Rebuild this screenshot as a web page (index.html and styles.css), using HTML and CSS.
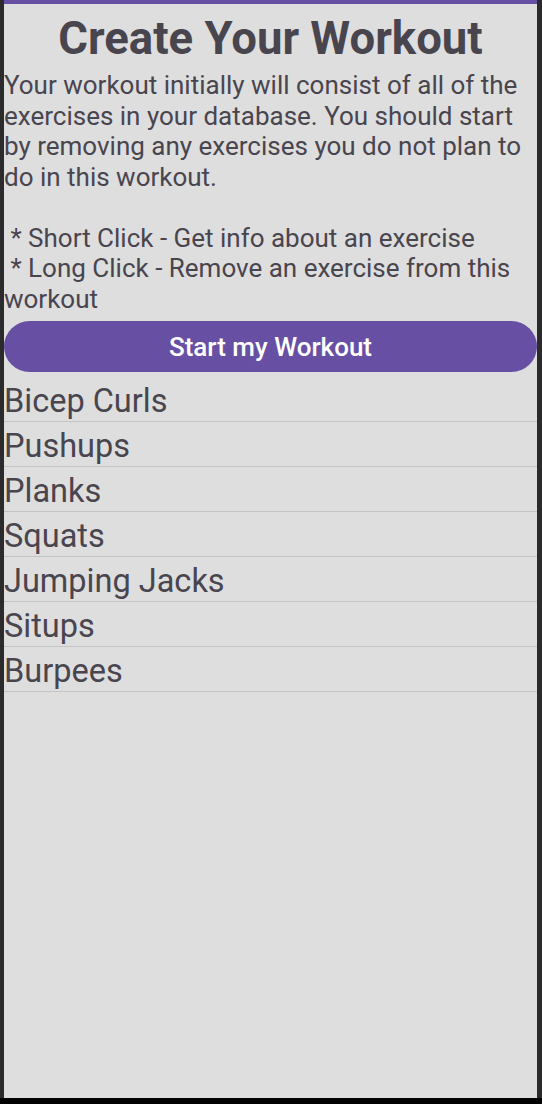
FILE: index.html
```html
<!DOCTYPE html>
<html>
<head>
<meta charset="utf-8">
<link rel="stylesheet" href="styles.css">
</head>
<body>
<div class="frame">
  <div class="screen">
    <h1 class="title">Create Your Workout</h1>
    <p class="intro">Your workout initially will consist of all of the exercises in your database. You should start by removing any exercises you do not plan to do in this workout.<br><br>&nbsp;* Short Click - Get info about an exercise<br>&nbsp;* Long Click - Remove an exercise from this workout</p>
    <button class="start">Start my Workout</button>
    <ul class="list">
      <li>Bicep Curls</li>
      <li>Pushups</li>
      <li>Planks</li>
      <li>Squats</li>
      <li>Jumping Jacks</li>
      <li>Situps</li>
      <li>Burpees</li>
    </ul>
  </div>
</div>
</body>
</html>
```
FILE: styles.css
```css
html, body {
  margin: 0;
  padding: 0;
  background: #000;
}
.frame {
  height: 1098px;
  background: #2b2b2e;
  padding: 0 5px 0 4px;
}
.screen {
  height: 1094px;
  background: #dedede;
  border-top: 4px solid #6750a4;
  font-family: Roboto, "Noto Sans", sans-serif;
  color: #49454f;
  display: flex;
  flex-direction: column;
}
.title {
  margin: 9px 0 0;
  font-size: 45.5px;
  font-weight: 700;
  text-align: center;
  line-height: 52px;
}
.intro {
  margin: 5px 0 0;
  font-size: 26px;
  line-height: 30.5px;
}
.start {
  margin: 7px 0 5px;
  height: 51px;
  border: none;
  border-radius: 26px;
  background: #6750a4;
  color: #fff;
  font-family: Roboto, "Noto Sans", sans-serif;
  font-weight: 500;
  font-size: 26px;
  padding: 0;
}
.list {
  list-style: none;
  margin: 0;
  padding: 0;
}
.list li {
  font-size: 32.5px;
  line-height: 35px;
  padding: 7px 0 2px;
  border-bottom: 1px solid #c4c4c4;
}
```
